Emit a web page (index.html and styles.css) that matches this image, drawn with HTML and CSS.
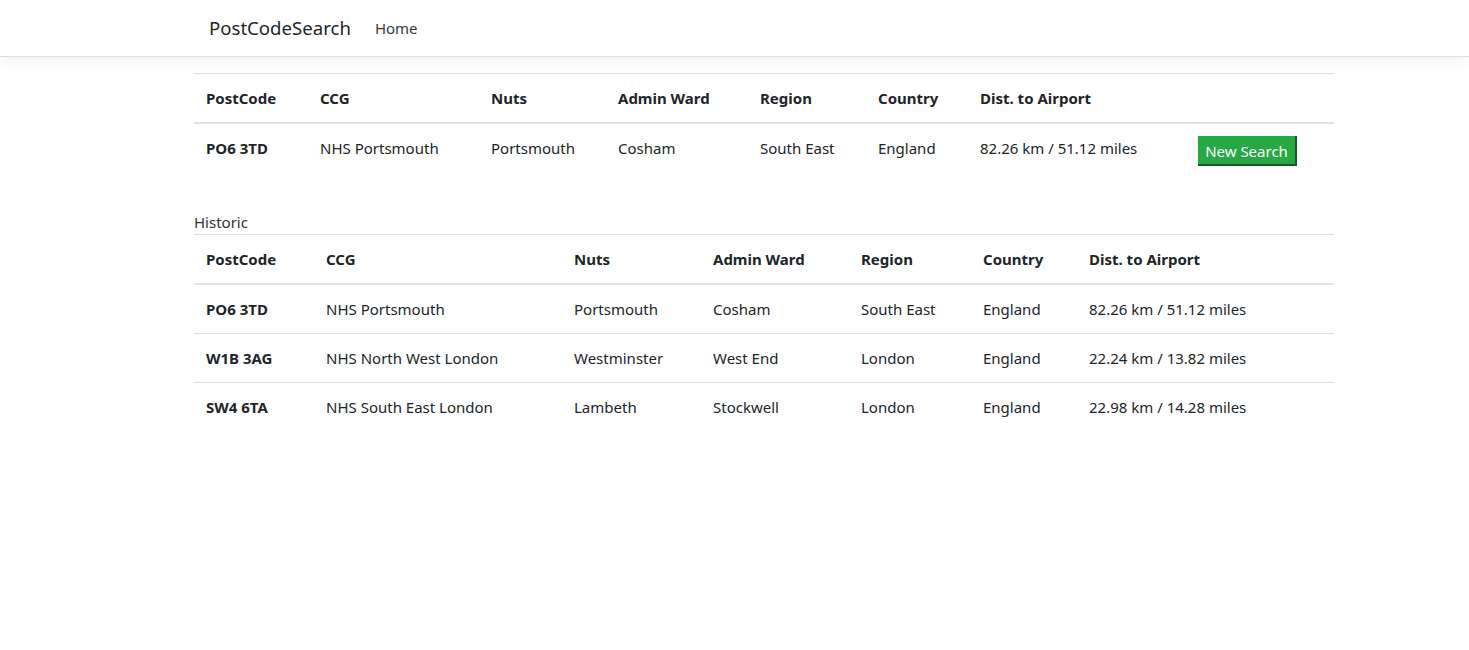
FILE: index.html
```html
<!DOCTYPE html>
<html lang="en">
<head>
<meta charset="utf-8">
<title>PostCodeSearch</title>
<link rel="stylesheet" href="styles.css">
</head>
<body>
<header class="navbar">
  <div class="container nav-inner">
    <a class="brand" href="#">PostCodeSearch</a>
    <a class="nav-link" href="#">Home</a>
  </div>
</header>
<main class="container main">
  <table class="table current">
    <colgroup>
      <col class="c1-pc"><col class="c1-ccg"><col class="c1-nuts"><col class="c1-ward"><col class="c1-region"><col class="c1-country"><col class="c1-dist"><col class="c1-btn">
    </colgroup>
    <thead>
      <tr><th>PostCode</th><th>CCG</th><th>Nuts</th><th>Admin Ward</th><th>Region</th><th>Country</th><th>Dist. to Airport</th><th></th></tr>
    </thead>
    <tbody>
      <tr><th>PO6 3TD</th><td>NHS Portsmouth</td><td>Portsmouth</td><td>Cosham</td><td>South East</td><td>England</td><td>82.26 km / 51.12 miles</td><td><button class="btn-success">New Search</button></td></tr>
    </tbody>
  </table>

  <div class="section-label">Historic</div>
  <table class="table historic">
    <colgroup>
      <col class="c2-pc"><col class="c2-ccg"><col class="c2-nuts"><col class="c2-ward"><col class="c2-region"><col class="c2-country"><col class="c2-dist">
    </colgroup>
    <thead>
      <tr><th>PostCode</th><th>CCG</th><th>Nuts</th><th>Admin Ward</th><th>Region</th><th>Country</th><th>Dist. to Airport</th></tr>
    </thead>
    <tbody>
      <tr><th>PO6 3TD</th><td>NHS Portsmouth</td><td>Portsmouth</td><td>Cosham</td><td>South East</td><td>England</td><td>82.26 km / 51.12 miles</td></tr>
      <tr><th>W1B 3AG</th><td>NHS North West London</td><td>Westminster</td><td>West End</td><td>London</td><td>England</td><td>22.24 km / 13.82 miles</td></tr>
      <tr><th>SW4 6TA</th><td>NHS South East London</td><td>Lambeth</td><td>Stockwell</td><td>London</td><td>England</td><td>22.98 km / 14.28 miles</td></tr>
    </tbody>
  </table>
</main>
</body>
</html>
```
FILE: styles.css
```css
* { box-sizing: border-box; }
html, body { margin: 0; padding: 0; }
body {
  font-family: "Noto Sans", "Open Sans", sans-serif;
  font-size: 15px;
  line-height: 24px;
  color: #212529;
  background: #fff;
}
.container {
  width: 1140px;
  margin-left: 194px;
}
.navbar {
  height: 57px;
  background: #fff;
  border-bottom: 1px solid #e0e0e0;
  box-shadow: 0 4px 12px rgba(0,0,0,0.05);
}
.nav-inner {
  display: flex;
  align-items: center;
  height: 56px;
  padding-left: 15px;
}
.brand {
  font-size: 18.6px;
  color: #212529;
  text-decoration: none;
  margin-right: 24px;
  line-height: 30px;
}
.nav-link {
  font-size: 15px;
  color: #3a3a3a;
  text-decoration: none;
}
.main { padding-top: 16px; }
.table {
  width: 1140px;
  border-collapse: collapse;
  table-layout: fixed;
}
.table th, .table td {
  padding: 12px;
  text-align: left;
  vertical-align: top;
  border-top: 1px solid #dee2e6;
  white-space: nowrap;
}
.table th { font-weight: 700; }
.table thead th { border-bottom: 2px solid #dee2e6; }
.table tbody tr:first-child th, .table tbody tr:first-child td { border-top: none; }
.current { margin-bottom: 32px; }
.c1-pc { width: 114px; } .c1-ccg { width: 171px; } .c1-nuts { width: 127px; } .c1-ward { width: 142px; }
.c1-region { width: 118px; } .c1-country { width: 102px; } .c1-dist { width: 218px; } .c1-btn { width: 148px; }
.c2-pc { width: 120px; } .c2-ccg { width: 248px; } .c2-nuts { width: 139px; } .c2-ward { width: 148px; }
.c2-region { width: 122px; } .c2-country { width: 106px; } .c2-dist { width: 257px; }
.btn-success {
  display: block;
  font-family: inherit;
  font-size: 15px;
  line-height: 28px;
  height: 30px;
  width: 99px;
  padding: 1px 0 0;
  color: #fff;
  background: #28a745;
  border: none;
  border-right: 2px solid #145a24;
  border-bottom: 2px solid #145a24;
  text-align: center;
}
.section-label {
  font-size: 15px;
  line-height: 24px;
  color: #333;
}
```
